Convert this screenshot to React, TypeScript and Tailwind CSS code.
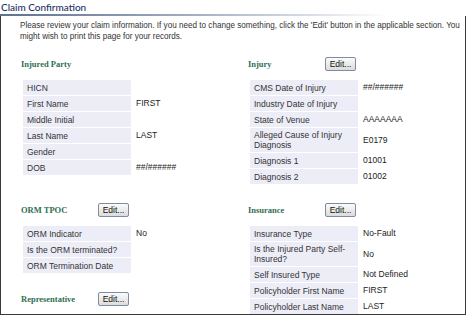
import React from 'react';

type Item = { label: string; value?: string; tall?: boolean };

const injuredParty: Item[] = [
  { label: 'HICN' },
  { label: 'First Name', value: 'FIRST' },
  { label: 'Middle Initial' },
  { label: 'Last Name', value: 'LAST' },
  { label: 'Gender' },
  { label: 'DOB', value: '##/######' },
];

const injury: Item[] = [
  { label: 'CMS Date of Injury', value: '##/######' },
  { label: 'Industry Date of Injury' },
  { label: 'State of Venue', value: 'AAAAAAA' },
  { label: 'Alleged Cause of Injury Diagnosis', value: 'E0179', tall: true },
  { label: 'Diagnosis 1', value: '01001' },
  { label: 'Diagnosis 2', value: '01002' },
];

const ormTpoc: Item[] = [
  { label: 'ORM Indicator', value: 'No' },
  { label: 'Is the ORM terminated?' },
  { label: 'ORM Termination Date' },
];

const insurance: Item[] = [
  { label: 'Insurance Type', value: 'No-Fault' },
  { label: 'Is the Injured Party Self-Insured?', value: 'No', tall: true },
  { label: 'Self Insured Type', value: 'Not Defined' },
  { label: 'Policyholder First Name', value: 'FIRST' },
  { label: 'Policyholder Last Name', value: 'LAST' },
];

function EditButton() {
  return (
    <button className="h-[14px] w-[31px] rounded-[2px] border border-[#7d8ba3] bg-gradient-to-b from-[#fbfbfb] to-[#dcdcdc] text-[8.5px] leading-[12px] text-[#111]">
      Edit...
    </button>
  );
}

function SectionHeading({ title, edit }: { title: string; edit?: boolean }) {
  return (
    <div className="flex h-[14px] items-center">
      <span className="w-[78px] pl-px font-['Liberation_Serif',serif] text-[8.5px] font-bold text-[#2f6f52]">
        {title}
      </span>
      {edit && <EditButton />}
    </div>
  );
}

function InfoTable({ items }: { items: Item[] }) {
  return (
    <div className="ml-[3px] flex flex-col gap-px">
      {items.map((it) => (
        <div key={it.label} className="flex">
          <div
            className={`flex w-[108px] items-center bg-[#ededf8] pl-[4px] pr-1 leading-[10px] ${
              it.tall ? 'h-[24px]' : 'h-[15px]'
            }`}
          >
            {it.label}
          </div>
          <div className="flex items-center pl-[5px] text-[#222]">{it.value}</div>
        </div>
      ))}
    </div>
  );
}

export default function App() {
  return (
    <div className="h-[316px] w-[466px] overflow-hidden bg-white font-['Liberation_Sans',Arial,sans-serif] text-[8.5px] text-[#333]">
      <div className="h-[14px] pl-px font-['Lato',sans-serif] text-[10px] font-medium leading-[14px] text-[#1a3064]">
        Claim Confirmation
      </div>
      <div className="h-[2px] w-[390px] bg-gradient-to-r from-[#5f718d] via-[#a3afc2] to-white" />
      <div className="h-[299px] border-x border-b border-[#3a3a3a]">
        <p className="pl-[19px] pt-[4px] text-[8.15px] leading-[11px]">
          Please review your claim information. If you need to change something, click the 'Edit' button in the applicable section. You might wish to print this page for your records.
        </p>
        <div className="mt-[15px] grid grid-cols-[227px_1fr] pl-[19px]">
          <div>
            <SectionHeading title="Injured Party" />
            <div className="mt-[9px]">
              <InfoTable items={injuredParty} />
            </div>
          </div>
          <div>
            <SectionHeading title="Injury" edit />
            <div className="mt-[9px]">
              <InfoTable items={injury} />
            </div>
          </div>
          <div className="mt-[19px]">
            <SectionHeading title="ORM TPOC" edit />
            <div className="mt-[9px]">
              <InfoTable items={ormTpoc} />
            </div>
            <div className="mt-[19px]">
              <SectionHeading title="Representative" edit />
            </div>
          </div>
          <div className="mt-[19px]">
            <SectionHeading title="Insurance" edit />
            <div className="mt-[9px]">
              <InfoTable items={insurance} />
            </div>
          </div>
        </div>
      </div>
    </div>
  );
}
